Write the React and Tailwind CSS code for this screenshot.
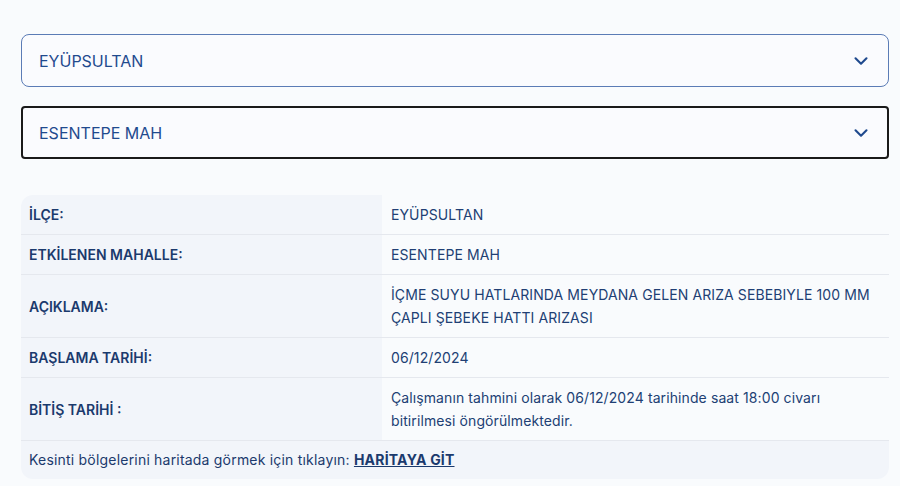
import { ChevronDown } from 'lucide-react';

const rows = [
  { label: 'İLÇE:', value: 'EYÜPSULTAN' },
  { label: 'ETKİLENEN MAHALLE:', value: 'ESENTEPE MAH' },
  { label: 'AÇIKLAMA:', value: 'İÇME SUYU HATLARINDA MEYDANA GELEN ARIZA SEBEBIYLE 100 MM ÇAPLI ŞEBEKE HATTI ARIZASI' },
  { label: 'BAŞLAMA TARİHİ:', value: '06/12/2024' },
  { label: 'BİTİŞ TARİHİ :', value: 'Çalışmanın tahmini olarak 06/12/2024 tarihinde saat 18:00 civarı bitirilmesi öngörülmektedir.' },
];

function Select({ value, focused }) {
  return (
    <div
      className={
        focused
          ? 'flex h-[53px] items-center justify-between rounded-[4px] border-2 border-[#1a1a1a] bg-[#fafbfe] pl-[16px] pr-[15px]'
          : 'flex h-[53px] items-center justify-between rounded-[8px] border border-[#5b7cb6] bg-[#fafbfe] pl-[17px] pr-[16px]'
      }
    >
      <span className="text-[16px] text-[#1f4a8e]">{value}</span>
      <ChevronDown size={22} strokeWidth={2.3} className="text-[#1f4a8e]" />
    </div>
  );
}

export default function App() {
  return (
    <div className="min-h-[486px] bg-[#f9fbfd] pt-[34px] pl-[21px] font-['Inter','Liberation_Sans',sans-serif]">
      <div className="flex w-[868px] flex-col gap-[19px]">
        <Select value="EYÜPSULTAN" />
        <Select value="ESENTEPE MAH" focused />
      </div>

      <div className="mt-[36px] w-[868px] overflow-hidden rounded-xl">
        {rows.map((r, i) => (
          <div key={i} className="grid grid-cols-[361px_1fr] border-b border-[#e5e8ee]">
            <div className="flex items-center bg-[#f2f5fa] px-[8px] py-[8px] text-[14px] leading-[23px] font-semibold text-[#1b3a6d]">
              {r.label}
            </div>
            <div className="bg-[#f9fbfd] py-[8px] pl-[9px] pr-[16px] text-[14px] leading-[23px] tracking-[0.1px] text-[#213f74]">
              {r.value}
            </div>
          </div>
        ))}
        <div className="bg-[#f2f5fa] px-[8px] py-[8px] text-[14px] leading-[22px] tracking-[0.2px] text-[#1b3a6d]">
          Kesinti bölgelerini haritada görmek için tıklayın:{' '}
          <a href="#" className="font-bold underline">HARİTAYA GİT</a>
        </div>
      </div>
    </div>
  );
}
